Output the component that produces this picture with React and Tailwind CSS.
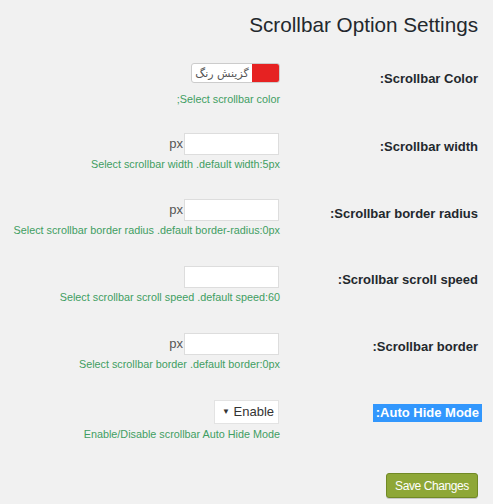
import React from "react";

function Row({ h, labelPt, label, children, highlight }) {
  return (
    <div className={`flex justify-end ${h}`}>
      <div className="flex flex-col items-end">{children}</div>
      <div className={`w-[198px] text-right text-[13px] leading-[18px] font-bold ${labelPt}`}>
        {highlight ? (
          <span className="inline-block bg-[#3297fd] text-white px-[3px] -mr-[4px] align-top">
            {label}
          </span>
        ) : (
          <span className="text-[#23282d]">{label}</span>
        )}
      </div>
    </div>
  );
}

function Desc({ children, mt }) {
  return (
    <div className={`text-[10.8px] leading-[15px] text-[#3f9e62] whitespace-nowrap ${mt}`}>{children}</div>
  );
}

function PxInput({ px = true }) {
  return (
    <div className="flex items-center">
      {px && <span className="text-[13px] text-[#555] mr-[1px] leading-[22px]">px</span>}
      <div className="w-[95px] h-[22px] bg-white border border-[#dddddd] mr-[1px]" />
    </div>
  );
}

export default function App() {
  return (
    <div className="min-h-[504px] bg-[#f1f1f1] font-['Liberation_Sans',Arial,sans-serif]">
      <div className="pr-[15px]">
        <h2 className="text-right text-[20.7px] leading-[27px] pt-[11px] text-[#23282d] font-normal h-[63px]">
          Scrollbar Option Settings
        </h2>

        <Row h="h-[70px]" labelPt="pt-[7px]" label=":Scrollbar Color">
          <div className="flex h-[20px] w-[89px] border border-[#cccccc] rounded-[3px] overflow-hidden bg-white">
            <div
              dir="rtl"
              className="flex-1 flex items-center justify-center text-[11px] leading-none text-[#555] font-['DejaVu_Sans',sans-serif]"
            >
              گزینش رنگ
            </div>
            <div className="w-[27px] bg-[#e62222]" />
          </div>
          <Desc mt="mt-[9px]">;Select scrollbar color</Desc>
        </Row>

        <Row h="h-[66px]" labelPt="pt-[5px]" label=":Scrollbar width">
          <PxInput />
          <Desc mt="mt-[2px]">Select scrollbar width .default width:5px</Desc>
        </Row>

        <Row h="h-[67px]" labelPt="pt-[6px]" label=":Scrollbar border radius">
          <PxInput />
          <Desc mt="mt-[2px]">Select scrollbar border radius .default border-radius:0px</Desc>
        </Row>

        <Row h="h-[67px]" labelPt="pt-[5px]" label=":Scrollbar scroll speed">
          <PxInput px={false} />
          <Desc mt="mt-[2px]">Select scrollbar scroll speed .default speed:60</Desc>
        </Row>

        <Row h="h-[67px]" labelPt="pt-[5px]" label=":Scrollbar border">
          <PxInput />
          <Desc mt="mt-[2px]">Select scrollbar border .default border:0px</Desc>
        </Row>

        <Row h="h-[73px]" labelPt="pt-[4px]" label=":Auto Hide Mode" highlight>
          <div className="flex items-center w-[65px] h-[24px] bg-white border border-[#e3e3e3] mr-[1px] text-[13px] text-[#333]">
            <span className="text-[8px] ml-[7px] text-[#333]">▼</span>
            <span className="ml-auto mr-[4px]">Enable</span>
          </div>
          <Desc mt="mt-[3px]">Enable/Disable scrollbar Auto Hide Mode</Desc>
        </Row>

        <div className="flex justify-end">
          <button className="w-[92px] h-[25px] bg-[#8ea737] border border-[#718a25] rounded-[3px] text-white text-[12px] tracking-[-0.4px] leading-none shadow-[0_1px_0_#c9c9c9]">
            Save Changes
          </button>
        </div>
      </div>
    </div>
  );
}
